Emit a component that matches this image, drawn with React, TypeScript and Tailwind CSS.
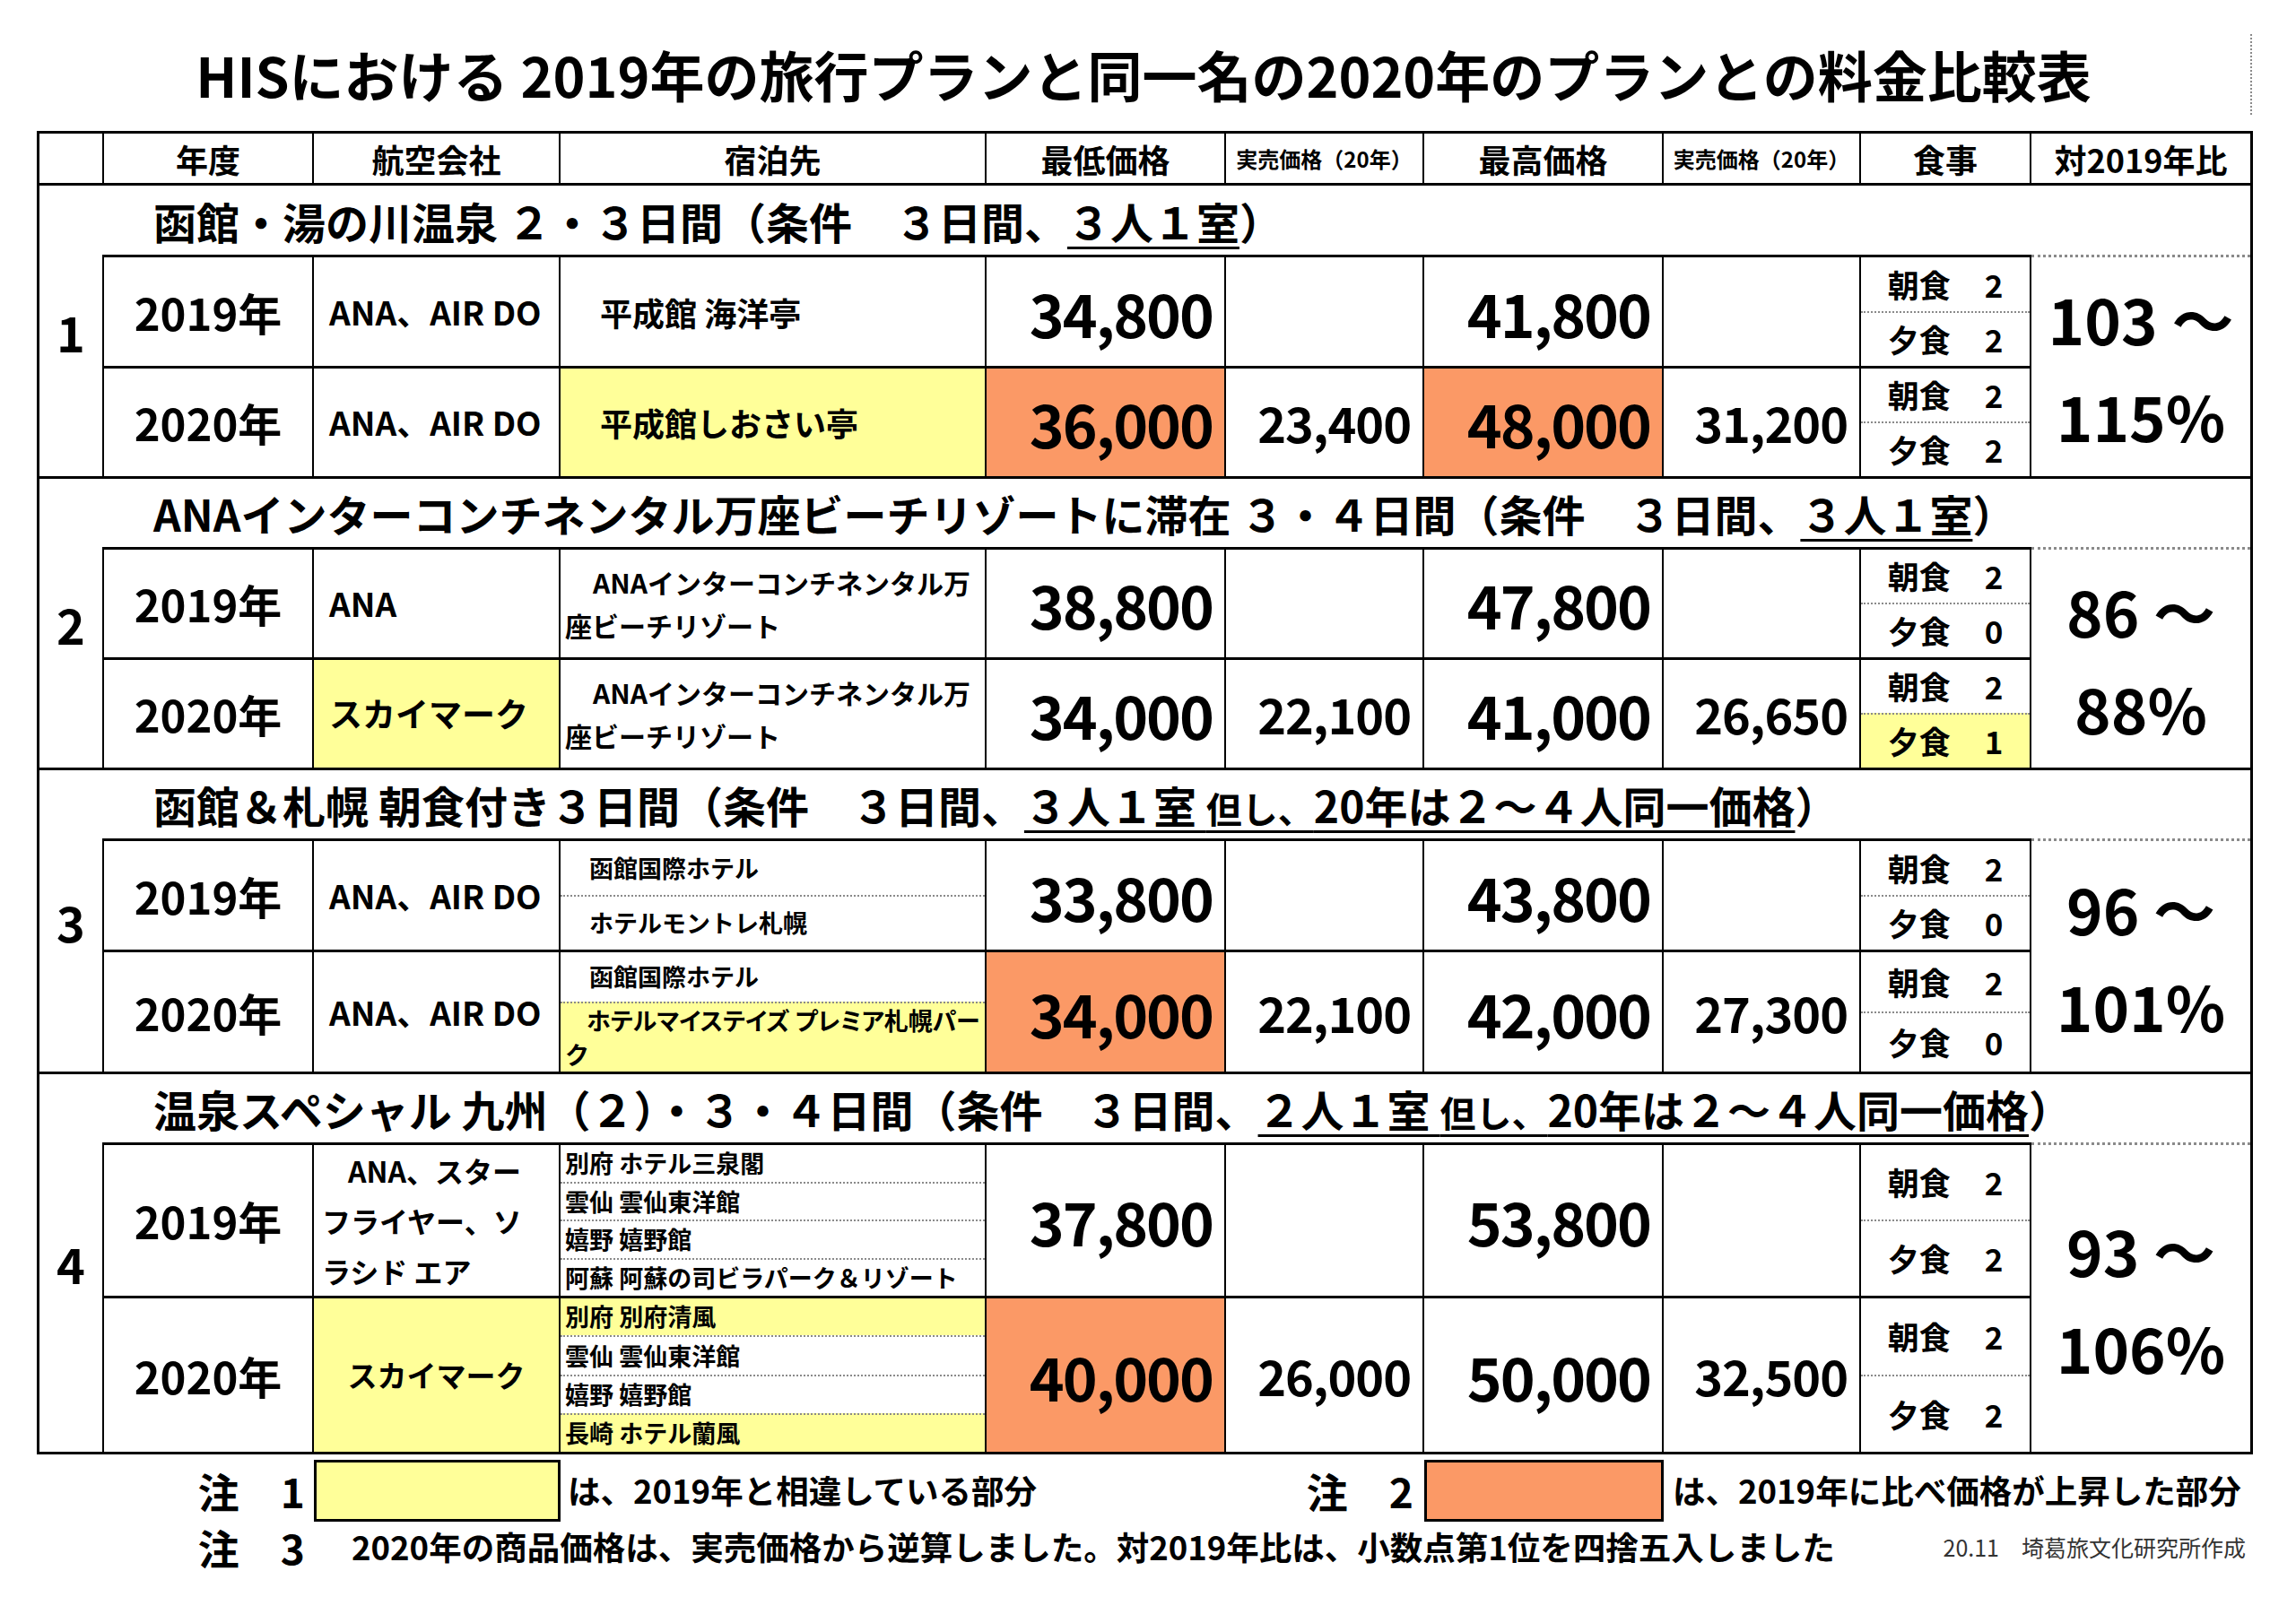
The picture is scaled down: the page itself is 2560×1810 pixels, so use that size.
import type { ReactNode } from "react";

// 列幅（年度〜対2019年比）
const COLS = "grid-cols-[234px_275px_475px_267px_221px_267px_220px_190px_244px]";
const HEAD_COLS = "grid-cols-[72px_234px_275px_475px_267px_221px_267px_220px_190px_244px]";
const NOTE_COLS = "grid-cols-[75px_234px_275px_475px_267px_221px_267px_220px_190px_244px]";
const YELLOW = "bg-[#ffff99]";
const ORANGE = "bg-[#fb9966]";
const DOT = "border-dotted border-[#8a8a8a]";

type Meal = { label: string; n: string; hl?: boolean };
type Row = {
  year: string;
  airline: ReactNode;
  airlineCls?: string;
  hotel: ReactNode;
  hotelCls?: string;
  low: string;
  lowUp?: boolean;
  lowReal?: string;
  high: string;
  highUp?: boolean;
  highReal?: string;
  meals: Meal[];
};
type Section = {
  no: string;
  title: ReactNode;
  titleCls: string;
  rowsCls: string;
  rows: Row[];
  ratio: [string, string];
};

function U({ children }: { children: ReactNode }) {
  return <span className="underline decoration-[3px] underline-offset-[8px]">{children}</span>;
}

function Sub({ children, cls = "", first = false }: { children: ReactNode; cls?: string; first?: boolean }) {
  return (
    <div className={`flex flex-1 flex-col justify-center ${first ? "" : `border-t-2 ${DOT}`} ${cls}`}>
      {children}
    </div>
  );
}

const MEALS = (a: string, b: string, hlB = false): Meal[] => [
  { label: "朝食", n: a },
  { label: "夕食", n: b, hl: hlB },
];

const sections: Section[] = [
  {
    no: "1",
    title: (
      <>
        函館・湯の川温泉 ２・３日間（条件　３日間、<U>３人１室</U>）
      </>
    ),
    titleCls: "h-[77px]",
    rowsCls: "grid-rows-[127px_120px]",
    rows: [
      {
        year: "2019年",
        airline: "ANA、AIR DO",
        hotel: <span className="pl-[44px] text-[36px]">平成館 海洋亭</span>,
        low: "34,800",
        high: "41,800",
        meals: MEALS("2", "2"),
      },
      {
        year: "2020年",
        airline: "ANA、AIR DO",
        hotel: <span className="pl-[44px] text-[36px]">平成館しおさい亭</span>,
        hotelCls: YELLOW,
        low: "36,000",
        lowUp: true,
        lowReal: "23,400",
        high: "48,000",
        highUp: true,
        highReal: "31,200",
        meals: MEALS("2", "2"),
      },
    ],
    ratio: ["103 ～", "115%"],
  },
  {
    no: "2",
    title: (
      <>
        ANAインターコンチネンタル万座ビーチリゾートに滞在 ３・４日間（条件　３日間、<U>３人１室</U>）
      </>
    ),
    titleCls: "h-[76px]",
    rowsCls: "grid-rows-[126px_120px]",
    rows: [
      {
        year: "2019年",
        airline: "ANA",
        hotel: (
          <div className="pl-[5px] text-[30px] leading-[48px]">
            <div className="pl-[31px]">ANAインターコンチネンタル万</div>
            <div>座ビーチリゾート</div>
          </div>
        ),
        low: "38,800",
        high: "47,800",
        meals: MEALS("2", "0"),
      },
      {
        year: "2020年",
        airline: "スカイマーク",
        airlineCls: YELLOW,
        hotel: (
          <div className="pl-[5px] text-[30px] leading-[48px]">
            <div className="pl-[31px]">ANAインターコンチネンタル万</div>
            <div>座ビーチリゾート</div>
          </div>
        ),
        low: "34,000",
        lowReal: "22,100",
        high: "41,000",
        highReal: "26,650",
        meals: MEALS("2", "1", true),
      },
    ],
    ratio: ["86 ～", "88%"],
  },
  {
    no: "3",
    title: (
      <>
        函館＆札幌 朝食付き３日間（条件　３日間、
        <U>
          ３人１室 <span className="text-[40px]">但し、</span>20年は２～４人同一価格
        </U>
        ）
      </>
    ),
    titleCls: "h-[76px]",
    rowsCls: "grid-rows-[127px_133px]",
    rows: [
      {
        year: "2019年",
        airline: "ANA、AIR DO",
        hotel: (
          <div className="flex h-full w-full flex-col text-[27px]">
            <Sub first>
              <span className="pl-[32px]">函館国際ホテル</span>
            </Sub>
            <Sub>
              <span className="pl-[32px]">ホテルモントレ札幌</span>
            </Sub>
          </div>
        ),
        low: "33,800",
        high: "43,800",
        meals: MEALS("2", "0"),
      },
      {
        year: "2020年",
        airline: "ANA、AIR DO",
        hotel: (
          <div className="flex h-full w-full flex-col text-[27px]">
            <div className="flex h-[61px] flex-col justify-center">
              <span className="pl-[32px]">函館国際ホテル</span>
            </div>
            <Sub cls={`${YELLOW} pl-[5px] leading-[38px]`}>
              <div className="pl-[24px] whitespace-nowrap [font-feature-settings:'palt']">
                ホテルマイステイズ プレミア札幌パー
              </div>
              <div>ク</div>
            </Sub>
          </div>
        ),
        low: "34,000",
        lowUp: true,
        lowReal: "22,100",
        high: "42,000",
        highReal: "27,300",
        meals: MEALS("2", "0"),
      },
    ],
    ratio: ["96 ～", "101%"],
  },
  {
    no: "4",
    title: (
      <>
        温泉スペシャル 九州（２）・３・４日間（条件　３日間、
        <U>
          ２人１室 <span className="text-[40px]">但し、</span>20年は２～４人同一価格
        </U>
        ）
      </>
    ),
    titleCls: "h-[76px]",
    rowsCls: "grid-rows-[174px_171px]",
    rows: [
      {
        year: "2019年",
        airline: (
          <div className="text-[32px] leading-[56px]">
            <div className="pl-[29px]">ANA、スター</div>
            <div>フライヤー、ソ</div>
            <div>ラシド エア</div>
          </div>
        ),
        airlineCls: "!pl-[9px]",
        hotel: (
          <div className="flex h-full w-full flex-col text-[27px]">
            {["別府 ホテル三泉閣", "雲仙 雲仙東洋館", "嬉野 嬉野館", "阿蘇 阿蘇の司ビラパーク＆リゾート"].map((t, i) => (
              <Sub key={t} first={i === 0} cls="pl-[5px]">
                {t}
              </Sub>
            ))}
          </div>
        ),
        low: "37,800",
        high: "53,800",
        meals: MEALS("2", "2"),
      },
      {
        year: "2020年",
        airline: <span className="text-[33px]">スカイマーク</span>,
        airlineCls: `${YELLOW} justify-center !pl-0`,
        hotel: (
          <div className="flex h-full w-full flex-col text-[27px]">
            {[
              ["別府 別府清風", true],
              ["雲仙 雲仙東洋館", false],
              ["嬉野 嬉野館", false],
              ["長崎 ホテル蘭風", true],
            ].map(([t, hl], i) => (
              <Sub key={t as string} first={i === 0} cls={`pl-[5px] ${hl ? YELLOW : ""}`}>
                {t}
              </Sub>
            ))}
          </div>
        ),
        low: "40,000",
        lowUp: true,
        lowReal: "26,000",
        high: "50,000",
        highReal: "32,500",
        meals: MEALS("2", "2"),
      },
    ],
    ratio: ["93 ～", "106%"],
  },
];

function RowCells({ row, first }: { row: Row; first: boolean }) {
  const base = `flex items-center border-r-2 border-black ${first ? "border-y-[3px]" : ""}`;
  return (
    <>
      <div className={`${base} justify-center text-[49px]`}>{row.year}</div>
      <div className={`${base} pl-[17px] text-[37px] ${row.airlineCls ?? ""}`}>{row.airline}</div>
      <div className={`${base} ${row.hotelCls ?? ""}`}>{row.hotel}</div>
      <div
        className={`${base} justify-end pr-[13px] text-[66px] leading-none tracking-[-2px] ${row.lowUp ? ORANGE : ""}`}
      >
        {row.low}
      </div>
      <div className={`${base} justify-end pr-[13px] text-[54px] leading-none tracking-[-1px]`}>{row.lowReal}</div>
      <div
        className={`${base} justify-end pr-[13px] text-[66px] leading-none tracking-[-2px] ${row.highUp ? ORANGE : ""}`}
      >
        {row.high}
      </div>
      <div className={`${base} justify-end pr-[13px] text-[54px] leading-none tracking-[-1px]`}>{row.highReal}</div>
      <div className={`flex flex-col border-r-2 border-black ${first ? "border-y-[3px]" : ""}`}>
        {row.meals.map((m, i) => (
          <div
            key={m.label}
            className={`flex flex-1 items-center justify-center gap-[38px] text-[35px] ${
              i ? `border-t-2 ${DOT}` : ""
            } ${m.hl ? YELLOW : ""}`}
          >
            <span>{m.label}</span>
            <span>{m.n}</span>
          </div>
        ))}
      </div>
    </>
  );
}

function SectionBlock({ s, last }: { s: Section; last: boolean }) {
  return (
    <div className={`flex ${last ? "" : "border-b-[3px] border-black"}`}>
      <div className="flex w-[70px] items-center justify-center text-[54px]">{s.no}</div>
      <div className="flex w-[2395px] flex-col">
        <div className={`flex items-center pl-[57px] text-[48px] whitespace-nowrap ${s.titleCls}`}>{s.title}</div>
        <div className={`grid ${COLS} ${s.rowsCls} border-l-2 border-black`}>
          <RowCells row={s.rows[0]} first />
          <div
            className={`row-span-2 flex flex-col items-center justify-center border-t-[3px] ${DOT} text-[69px] leading-[108px]`}
          >
            <span>{s.ratio[0]}</span>
            <span>{s.ratio[1]}</span>
          </div>
          <RowCells row={s.rows[1]} first={false} />
        </div>
      </div>
    </div>
  );
}

const HEADERS: ReactNode[] = [
  "",
  "年度",
  "航空会社",
  "宿泊先",
  "最低価格",
  <span className="text-[24px]">実売価格（20年）</span>,
  "最高価格",
  <span className="text-[24px]">実売価格（20年）</span>,
  "食事",
  "対2019年比",
];

export default function App() {
  return (
    <div className="min-h-[1810px] w-[2560px] bg-white pt-[38px] pl-[41px] font-['Noto_Sans_CJK_JP','Noto_Sans_CJK_SC',sans-serif] font-bold text-black">
      {/* タイトル */}
      <div className={`flex h-[90px] w-[2470px] items-center justify-center border-r-2 ${DOT} text-[61px]`}>
        HISにおける 2019年の旅行プランと同一名の2020年のプランとの料金比較表
      </div>

      {/* 表 */}
      <div className="mt-[18px] w-[2471px] border-[3px] border-black">
        <div className={`grid ${HEAD_COLS} h-[58px] border-b-[3px] border-black text-[36px]`}>
          {HEADERS.map((h, i) => (
            <div key={i} className={`flex items-center justify-center ${i < 9 ? "border-r-2 border-black" : ""}`}>
              {h}
            </div>
          ))}
        </div>
        {sections.map((s, i) => (
          <SectionBlock key={s.no} s={s} last={i === sections.length - 1} />
        ))}
      </div>

      {/* 注 */}
      <div className={`grid ${NOTE_COLS} mt-[6px] h-[63px] text-[36.5px]`}>
        <div />
        <div className="flex items-center justify-end gap-[46px] pr-[10px] text-[46px]">
          <span>注</span>
          <span>1</span>
        </div>
        <div className={`border-[3px] border-black ${YELLOW}`} />
        <div className="flex items-center pl-[8px] whitespace-nowrap">は、2019年と相違している部分</div>
        <div />
        <div className="flex items-center justify-end gap-[46px] pr-[12px] text-[46px]">
          <span>注</span>
          <span>2</span>
        </div>
        <div className={`border-[3px] border-black ${ORANGE}`} />
        <div className="col-span-3 flex items-center pl-[10px] whitespace-nowrap">は、2019年に比べ価格が上昇した部分</div>
      </div>
      <div className={`grid ${NOTE_COLS} h-[60px] text-[36.5px]`}>
        <div />
        <div className="flex items-center justify-end gap-[46px] pr-[10px] text-[46px]">
          <span>注</span>
          <span>3</span>
        </div>
        <div className="col-span-5 flex items-center pl-[42px] whitespace-nowrap">
          2020年の商品価格は、実売価格から逆算しました。対2019年比は、小数点第1位を四捨五入しました
        </div>
        <div className="col-span-3 flex items-center justify-end pr-[5px] text-[25px] font-normal text-[#333]">
          20.11　埼葛旅文化研究所作成
        </div>
      </div>
    </div>
  );
}
